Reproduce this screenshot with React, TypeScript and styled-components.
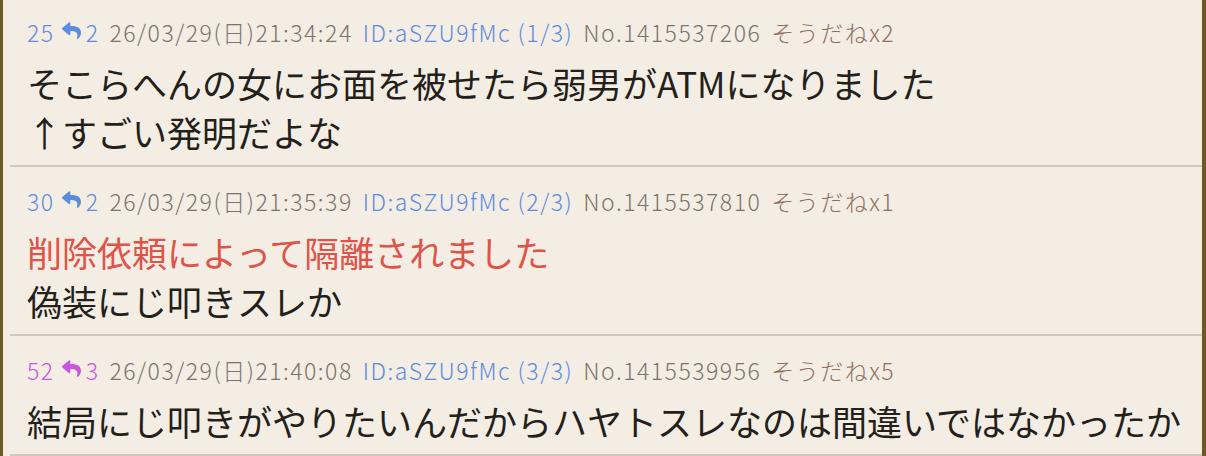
import styled, { createGlobalStyle } from 'styled-components'
import { FaReply } from 'react-icons/fa'

const GlobalStyle = createGlobalStyle`
  html, body {
    margin: 0;
    padding: 0;
    background: #f3ede4;
  }
  body {
    font-family: 'Noto Sans CJK JP', 'Noto Sans', sans-serif;
  }
`

const Thread = styled.div`
  width: 1206px;
  height: 456px;
  box-sizing: border-box;
  background: #f3ede4;
  border-left: 3px solid #6f5828;
  border-right: 4px solid #6f5828;
  overflow: hidden;
`

const List = styled.div`
  margin-top: -2px;
`

const Post = styled.div`
  margin-left: 7px;
  padding: 19px 0 9px 17px;
  border-bottom: 2px solid #cfc9bd;
`

const Header = styled.div`
  display: flex;
  align-items: center;
  height: 30px;
  font-size: 23px;
  font-weight: 300;
  letter-spacing: 1.5px;
  line-height: 30px;
  color: #7b746b;
  white-space: nowrap;
`

const ResNo = styled.span<{ $hot?: boolean }>`
  display: inline-flex;
  align-items: center;
  color: ${(p) => (p.$hot ? '#c956df' : '#5b8ce0')};
  margin-right: 10px;
  svg {
    margin: 0 5px 3px 7px;
    font-size: 19px;
  }
`

const DateText = styled.span`
  margin-right: 10px;
`

const IdText = styled.span`
  color: #5b8ce0;
  margin-right: 10px;
`

const NoText = styled.span`
  margin-right: 10px;
`

const Soudane = styled.span`
  color: #8f6f60;
`

const Body = styled.div`
  margin-top: 11px;
  font-size: 35px;
  line-height: 49px;
  color: #231f1b;
  white-space: nowrap;
`

const Line = styled.div<{ $deleted?: boolean }>`
  color: ${(p) => (p.$deleted ? '#de5448' : 'inherit')};
`

type PostData = {
  res: number
  replies: number
  hot?: boolean
  date: string
  id: string
  count: string
  no: string
  soudane: number
  lines: { text: string; deleted?: boolean }[]
}

const posts: PostData[] = [
  {
    res: 25,
    replies: 2,
    date: '26/03/29(日)21:34:24',
    id: 'ID:aSZU9fMc',
    count: '(1/3)',
    no: 'No.1415537206',
    soudane: 2,
    lines: [
      { text: 'そこらへんの女にお面を被せたら弱男がATMになりました' },
      { text: '↑すごい発明だよな' },
    ],
  },
  {
    res: 30,
    replies: 2,
    date: '26/03/29(日)21:35:39',
    id: 'ID:aSZU9fMc',
    count: '(2/3)',
    no: 'No.1415537810',
    soudane: 1,
    lines: [
      { text: '削除依頼によって隔離されました', deleted: true },
      { text: '偽装にじ叩きスレか' },
    ],
  },
  {
    res: 52,
    replies: 3,
    hot: true,
    date: '26/03/29(日)21:40:08',
    id: 'ID:aSZU9fMc',
    count: '(3/3)',
    no: 'No.1415539956',
    soudane: 5,
    lines: [
      { text: '結局にじ叩きがやりたいんだからハヤトスレなのは間違いではなかったか' },
    ],
  },
]

const App = () => {
  return (
    <>
      <GlobalStyle />
      <Thread>
        <List>
          {posts.map((p) => (
            <Post key={p.no}>
              <Header>
                <ResNo $hot={p.hot}>
                  {p.res}
                  <FaReply />
                  {p.replies}
                </ResNo>
                <DateText>{p.date}</DateText>
                <IdText>
                  {p.id} {p.count}
                </IdText>
                <NoText>{p.no}</NoText>
                <Soudane>そうだねx{p.soudane}</Soudane>
              </Header>
              <Body>
                {p.lines.map((l, i) => (
                  <Line key={i} $deleted={l.deleted}>
                    {l.text}
                  </Line>
                ))}
              </Body>
            </Post>
          ))}
        </List>
      </Thread>
    </>
  )
}

export default App
